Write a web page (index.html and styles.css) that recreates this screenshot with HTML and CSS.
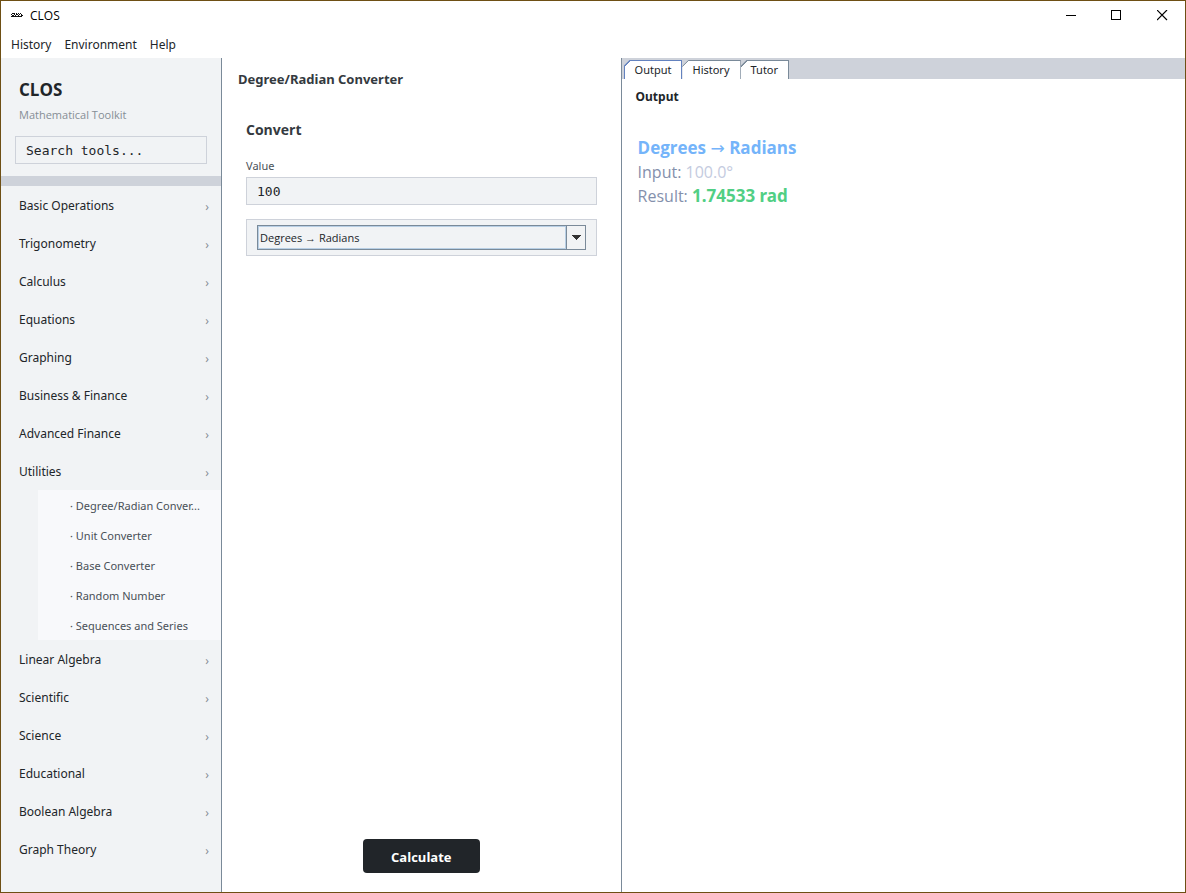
FILE: index.html
```html
<!DOCTYPE html>
<html lang="en">
<head>
<meta charset="utf-8">
<title>CLOS</title>
<link rel="stylesheet" href="styles.css">
</head>
<body>
<div class="window">
  <header class="titlebar">
    <svg class="app-icon" width="12" height="6" viewBox="0 0 12 6" aria-hidden="true" shape-rendering="crispEdges">
      <path fill="#111" d="M1 1h3v1H1zM5 1h1v1H5zM7 1h1v1H7zM9 1h1v1H9zM0 2h1v1H0zM3 2h1v1H3zM5 2h2v1H5zM8 2h1v1H8zM10 2h1v1h-1zM1 3h2v1H1zM4 3h1v1H4zM7 3h1v1H7zM10 3h2v1h-2zM0 4h11v1H0z"/>
    </svg>
    <span class="app-name">CLOS</span>
    <div class="window-buttons">
      <button type="button" aria-label="Minimize"><svg width="11" height="11" viewBox="0 0 11 11" shape-rendering="crispEdges"><path d="M1 5.500h10" stroke="#000" fill="none"/></svg></button>
      <button type="button" aria-label="Maximize"><svg width="11" height="11" viewBox="0 0 11 11" shape-rendering="crispEdges"><path d="M.5.5h9v9h-9z" stroke="#000" fill="none"/></svg></button>
      <button type="button" aria-label="Close"><svg width="11" height="11" viewBox="0 0 11 11"><path d="M0 0l10 10M10 0L0 10" stroke="#000" stroke-width="1.200" fill="none"/></svg></button>
    </div>
  </header>
  <nav class="menubar" aria-label="Main menu">
    <button type="button">History</button>
    <button type="button">Environment</button>
    <button type="button">Help</button>
  </nav>
  <div class="panes">
    <aside class="sidebar">
      <div class="brand">
        <h1>CLOS</h1>
        <p>Mathematical Toolkit</p>
        <input class="field" type="text" value="Search tools..." aria-label="Search tools">
      </div>
      <nav class="tools" aria-label="Tools">
        <button type="button" class="category">Basic Operations<span>›</span></button>
        <button type="button" class="category">Trigonometry<span>›</span></button>
        <button type="button" class="category">Calculus<span>›</span></button>
        <button type="button" class="category">Equations<span>›</span></button>
        <button type="button" class="category">Graphing<span>›</span></button>
        <button type="button" class="category">Business &amp; Finance<span>›</span></button>
        <button type="button" class="category">Advanced Finance<span>›</span></button>
        <button type="button" class="category" aria-expanded="true">Utilities<span>›</span></button>
        <div class="subtools">
          <button type="button">· Degree/Radian Conver...</button>
          <button type="button">· Unit Converter</button>
          <button type="button">· Base Converter</button>
          <button type="button">· Random Number</button>
          <button type="button">· Sequences and Series</button>
        </div>
        <button type="button" class="category">Linear Algebra<span>›</span></button>
        <button type="button" class="category">Scientific<span>›</span></button>
        <button type="button" class="category">Science<span>›</span></button>
        <button type="button" class="category">Educational<span>›</span></button>
        <button type="button" class="category">Boolean Algebra<span>›</span></button>
        <button type="button" class="category">Graph Theory<span>›</span></button>
      </nav>
    </aside>
    <main class="tool">
      <h2>Degree/Radian Converter</h2>
      <form class="form">
        <h3>Convert</h3>
        <label for="value">Value</label>
        <input class="field" id="value" type="text" value="100">
        <div class="combo-frame">
          <div class="combo">
            <select aria-label="Conversion"><option>Degrees → Radians</option><option>Radians → Degrees</option></select>
            <span class="combo-arrow"><svg width="10" height="5" viewBox="0 0 10 5" shape-rendering="crispEdges"><path fill="#333" d="M0 0h10L5 5z"/></svg></span>
          </div>
        </div>
        <button type="button" class="calculate">Calculate</button>
      </form>
    </main>
    <section class="results">
      <div class="tabs" role="tablist">
        <button type="button" role="tab" class="tab selected" aria-selected="true">Output</button>
        <button type="button" role="tab" class="tab">History</button>
        <button type="button" role="tab" class="tab">Tutor</button>
      </div>
      <h2>Output</h2>
      <div class="output">
        <p class="heading">Degrees <span class="arrow">→</span> Radians</p>
        <p>Input: <span class="input-value">100.0°</span></p>
        <p>Result: <strong>1.74533 rad</strong></p>
      </div>
    </section>
  </div>
</div>
</body>
</html>
```

FILE: styles.css
```css
* { box-sizing: border-box; }
html, body { height: 100%; margin: 0; }
body, button, input, select {
  font-family: "Open Sans", "Liberation Sans", sans-serif;
  font-size: 12px;
  color: #212529;
}
h1, h2, h3, p { margin: 0; }
button { margin: 0; padding: 0; border: 0; background: none; text-align: left; }

.window {
  display: flex;
  flex-direction: column;
  min-height: 100vh;
  border: 1px solid #6e4f14;
  background: #fff;
}

.titlebar { display: flex; align-items: center; height: 28px; padding-left: 10px; }
.app-name { margin-left: 7px; color: #000; }
.window-buttons { display: flex; margin-left: auto; }
.window-buttons button { display: grid; place-items: center; width: 46px; height: 28px; }

.menubar { display: flex; gap: 13px; height: 29px; padding: 2px 10px 0; }
.menubar button { font-family: "Noto Sans", sans-serif; font-size: 12px; }

.panes {
  display: grid;
  grid-template-columns: 221px minmax(300px, 400fr) minmax(300px, 564fr);
  flex: 1;
}

.sidebar { border-right: 1px solid #7a8a99; background: #f1f3f5; }
.brand { padding: 20px 14px 12px; border-bottom: 10px solid #ced2da; }
.brand h1 { padding-left: 4px; font-size: 17px; line-height: 24px; }
.brand p { padding: 4px 4px 12px; font-size: 11px; line-height: 18px; color: #868e96; }
.field {
  display: block;
  width: 100%;
  height: 28px;
  padding: 0 10px;
  border: 1px solid #ced2da;
  border-radius: 0;
  background: #f1f3f5;
  font-family: "DejaVu Sans Mono", monospace;
  font-size: 13px;
}

.category {
  display: flex;
  align-items: center;
  justify-content: space-between;
  width: 100%;
  height: 38px;
  padding: 0 12px 0 18px;
  font-family: "Noto Sans", sans-serif;
}
.category span { padding-top: 2px; color: #868e96; }
.subtools { margin-left: 37px; background: #f8f9fb; }
.subtools button {
  display: block;
  width: 100%;
  height: 30px;
  padding-left: 32px;
  font-family: "Noto Sans", sans-serif;
  font-size: 11px;
  color: #495057;
}

.tool { display: flex; flex-direction: column; padding: 11px 24px 19px 16px; border-right: 1px solid #7a8a99; color: #343a40; }
.tool h2 { font-family: "Noto Sans", sans-serif; font-size: 13px; line-height: 20px; }
.form { display: flex; flex-direction: column; flex: 1; padding: 30px 0 0 8px; }
.form h3 { font-size: 14px; line-height: 22px; }
.form label { margin: 16px 0 2px; font-family: "Noto Sans", sans-serif; font-size: 11px; line-height: 18px; color: #495057; }
.combo-frame { margin-top: 14px; padding: 5px 10px; border: 1px solid #ced2da; background: #f1f3f5; }
.combo { display: grid; grid-template-columns: 1fr 19px; height: 25px; border: 1px solid #7a8a99; }
.combo select {
  grid-area: 1 / 1;
  appearance: none;
  width: 100%;
  padding: 0 1px;
  border: 1px solid #b8cfe5;
  border-radius: 0;
  background: none;
  font-size: 11px;
}
.combo-arrow {
  grid-area: 1 / 2;
  display: grid;
  place-items: center;
  border-left: 1px solid #7a8a99;
  pointer-events: none;
}
.calculate {
  align-self: center;
  margin-top: auto;
  padding: 2px 28px 0;
  height: 34px;
  border-radius: 4px;
  background: #212529;
  font-size: 13px;
  font-weight: 700;
  color: #fff;
}

.tabs { display: flex; height: 21px; padding: 2px 0 0 2px; background: #ced2da; }
.tab {
  --line: #7a8a99;
  padding: 0 10px 2px;
  border: 1px solid var(--line);
  border-width: 1px 1px 0 0;
  background: linear-gradient(135deg, var(--line) 5px, #fff 5px) border-box;
  clip-path: polygon(6px 0, 100% 0, 100% 100%, 0 100%, 0 6px);
  font-family: "Noto Sans", sans-serif;
  font-size: 11px;
}
.tab.selected { --line: #6382bf; border-left-width: 1px; }
.results h2 { padding: 8px 14px; font-family: "Noto Sans", sans-serif; font-size: 12px; line-height: 20px; }
.output { padding: 21px 16px; font-size: 16px; line-height: 24px; color: #8490ac; }
.output .heading { font-size: 17px; font-weight: 700; color: #74b4fa; }
.arrow { font-family: "DejaVu Sans", sans-serif; font-weight: 400; line-height: 1; }
.input-value { color: #c4cbe0; }
.output strong { font-family: "Noto Sans", sans-serif; font-size: 17px; line-height: 1; color: #51cf84; }
```
